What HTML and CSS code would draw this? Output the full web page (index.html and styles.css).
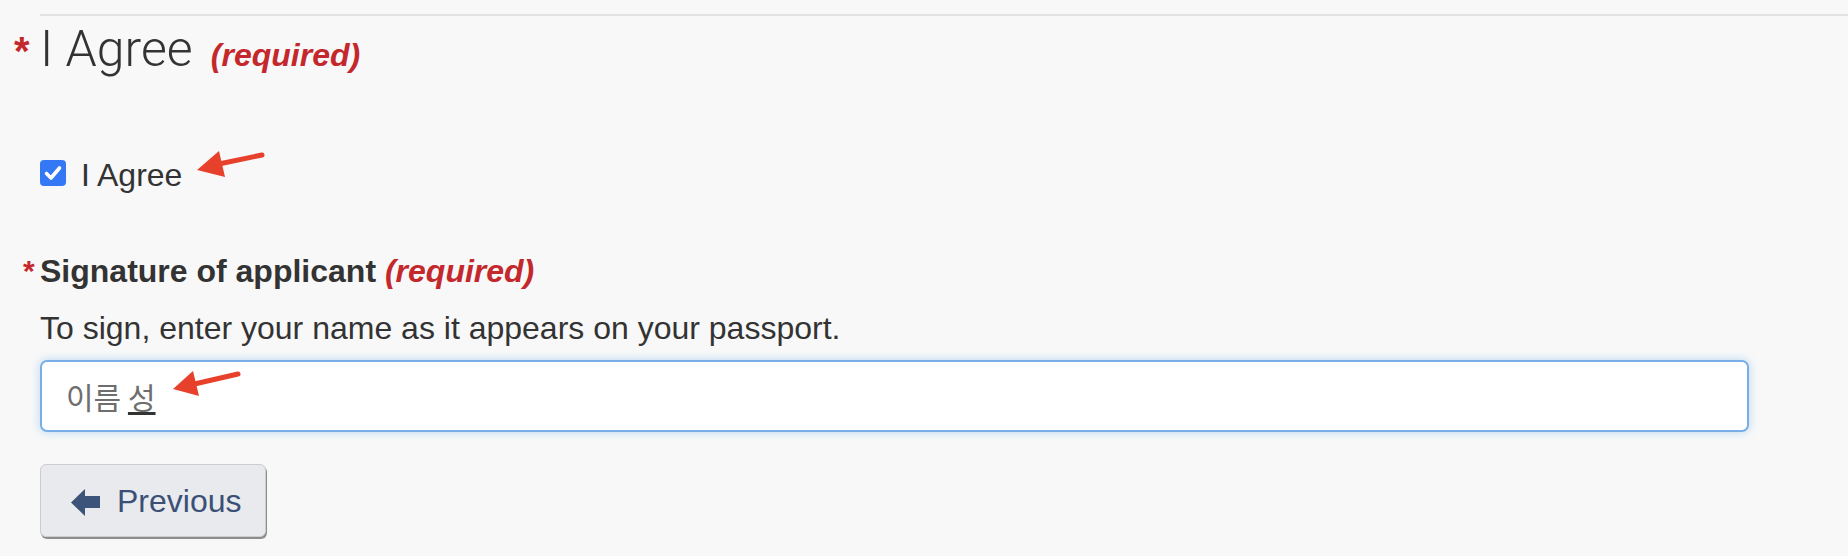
FILE: index.html
```html
<!DOCTYPE html>
<html lang="en">
<head>
<meta charset="utf-8">
<title>Application</title>
<link rel="stylesheet" href="styles.css">
</head>
<body>
<div class="page">
  <hr class="rule">
  <h2 class="legend"><span class="star">*</span>I Agree <span class="req req-lg">(required)</span></h2>

  <label class="check-row">
    <span class="checkbox"><svg viewBox="0 0 26 26" width="26" height="26"><path d="M6.5 13.5 L11 18 L19.5 8" fill="none" stroke="#fff" stroke-width="3.6" stroke-linecap="round" stroke-linejoin="round"/></svg></span>
    <span class="check-text">I Agree</span>
  </label>

  <div class="sig">
    <label class="sig-label"><span class="star star-sm">*</span>Signature of applicant <span class="req">(required)</span></label>
    <p class="help">To sign, enter your name as it appears on your passport.</p>
    <div class="input">이름 <span class="compose">성</span></div>
  </div>

  <button class="btn" type="button">
    <svg class="btn-icon" viewBox="0 0 29 27" width="29" height="27"><polygon points="0,13.5 14,0 14,7 29,7 29,19 14,19 14,27" fill="#3c5479"/></svg>
    <span>Previous</span>
  </button>
</div>

<svg class="annot" width="1848" height="556" viewBox="0 0 1848 556">
  <line x1="262" y1="155" x2="214" y2="165" stroke="#e8412b" stroke-width="5" stroke-linecap="round"/>
  <polygon points="197,170 219,151 225,177" fill="#e8412b"/>
  <line x1="238" y1="374" x2="190" y2="385" stroke="#e8412b" stroke-width="5" stroke-linecap="round"/>
  <polygon points="173,389 193,371 199,396" fill="#e8412b"/>
</svg>
</body>
</html>
```

FILE: styles.css
```css
html, body {
  margin: 0;
  padding: 0;
  background: #f8f8f8;
}

body {
  position: relative;
  width: 1848px;
  height: 556px;
  overflow: hidden;
  color: #333;
  font-family: "Liberation Sans", Arial, sans-serif;
}

.page {
  padding: 14px 0 0 40px;
}

.rule {
  height: 2px;
  margin: 0;
  border: 0;
  background: #e2e2e2;
}

.legend {
  margin: 5px 0 0;
  font-family: Roboto, "Liberation Sans", sans-serif;
  font-weight: 300;
  font-size: 50px;
  line-height: 56px;
  color: #333;
}

.star {
  display: inline-block;
  vertical-align: top;
  width: 26px;
  margin: 10px 0 0 -26px;
  font-family: "Liberation Sans", Arial, sans-serif;
  font-weight: bold;
  font-style: normal;
  font-size: 40px;
  line-height: 40px;
  color: #c4282c;
}

.star-sm {
  width: 17px;
  margin: 5px 0 0 -17px;
  font-size: 30px;
  line-height: 30px;
}

.req {
  font-family: "Liberation Sans", Arial, sans-serif;
  font-size: 32px;
  line-height: 1;
  font-weight: bold;
  font-style: italic;
  color: #c4282c;
}

.req-lg {
  margin-left: 6px;
}

.check-row {
  display: flex;
  align-items: flex-start;
  gap: 15px;
  margin-top: 78px;
  font-size: 32px;
  line-height: 40px;
}

.checkbox {
  display: flex;
  align-items: center;
  justify-content: center;
  width: 26px;
  height: 26px;
  margin-top: 5px;
  border-radius: 4px;
  background: #3478f6;
}

.checkbox svg {
  display: block;
}

.sig-label {
  display: block;
  margin-top: 56px;
  font-size: 32px;
  line-height: 40px;
  font-weight: bold;
}

.help {
  margin: 17px 0 0;
  font-size: 32px;
  line-height: 40px;
}

.input {
  display: flex;
  align-items: center;
  box-sizing: border-box;
  height: 72px;
  margin: 12px 99px 0 0;
  padding: 0 24px;
  background: #fff;
  border: 2px solid #7aaee6;
  border-radius: 7px;
  box-shadow: 0 0 10px rgba(102, 175, 233, 0.45);
  font-family: "Noto Sans CJK KR", sans-serif;
  font-size: 30px;
  line-height: 40px;
  color: #6e6e6e;
  white-space: pre;
}

.compose {
  text-decoration: underline;
  text-decoration-thickness: 3px;
  text-underline-offset: 3px;
  text-decoration-color: #333;
}

.btn {
  display: flex;
  align-items: center;
  gap: 17px;
  box-sizing: border-box;
  width: 226px;
  height: 73px;
  margin-top: 32px;
  padding: 0 0 0 30px;
  background: #e9eaed;
  border: 1px solid #cdcdcd;
  border-radius: 6px;
  box-shadow: 1px 2px 0 #8d8d8d;
  font-family: "Liberation Sans", Arial, sans-serif;
  font-size: 32px;
  line-height: 40px;
  color: #3a5077;
}

.btn-icon {
  display: block;
  margin-top: 4px;
}

.annot {
  position: absolute;
  top: 0;
  left: 0;
  pointer-events: none;
}
```
